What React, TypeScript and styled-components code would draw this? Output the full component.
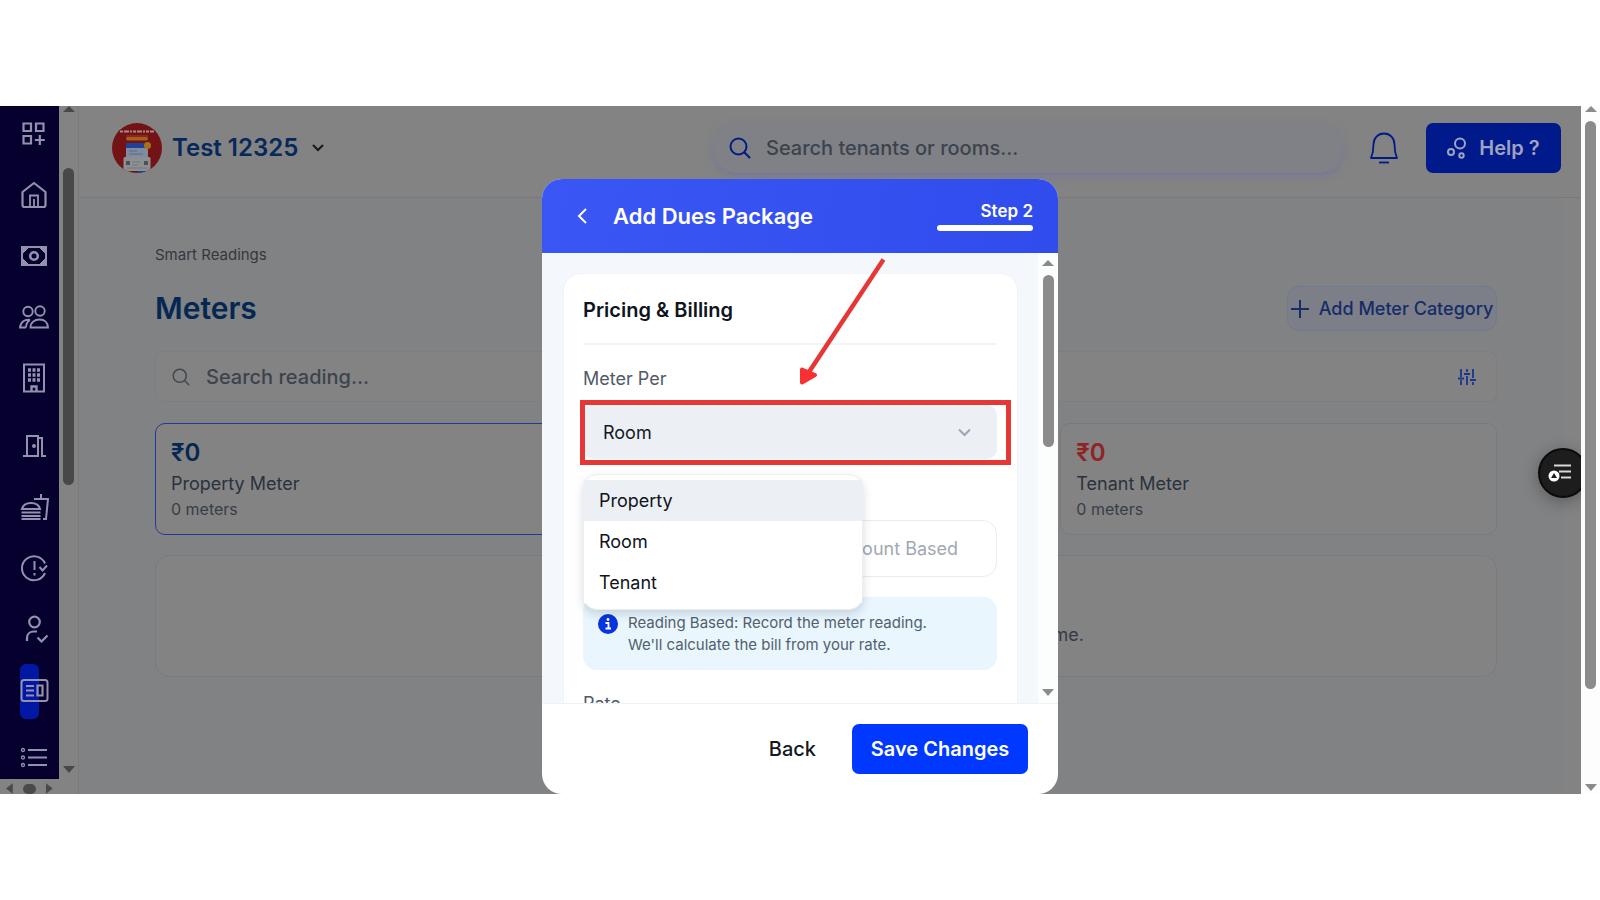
import React from "react";
import styled, { createGlobalStyle } from "styled-components";

const GlobalStyle = createGlobalStyle`
  *, *::before, *::after { box-sizing: border-box; }
  body { margin: 0; background: #fff; font-family: Inter, "Liberation Sans", sans-serif; }
  button, input, select { font-family: inherit; margin: 0; }
  h1, h2, h3, p { margin: 0; }
`;

const Page = styled.div`
  display: flex;
  height: 100vh;
  min-height: 700px;
  padding: 106px 0;
`;

const Frame = styled.div`
  position: relative;
  display: flex;
  flex: 1;
  min-width: 0;
`;

const Shell = styled.div`
  position: relative;
  display: flex;
  flex: 1;
  min-width: 0;
  overflow: hidden;
  background: #818284;
`;

/* ---------- scroll bars ---------- */

const Bar = styled.div<{ $width: number; $bg: string; $pad: string }>`
  display: flex;
  flex-direction: column;
  align-items: center;
  flex: none;
  width: ${(p) => p.$width}px;
  padding: ${(p) => p.$pad};
  background: ${(p) => p.$bg};
`;

const Track = styled.div`
  display: flex;
  flex-direction: column;
  flex: 1;
  margin: 8px 0 6px;
`;

const Space = styled.div<{ $grow: number }>`
  flex: ${(p) => p.$grow} 0 0;
`;

const Thumb = styled.div<{ $grow: number; $color: string }>`
  flex: ${(p) => p.$grow} 0 0;
  width: 11px;
  border-radius: 6px;
  background: ${(p) => p.$color};
`;

function ScrollBar(props: {
  width: number;
  bg: string;
  color: string;
  pad: string;
  parts: [number, number, number];
}) {
  const { width, bg, color, pad, parts } = props;
  return (
    <Bar $width={width} $bg={bg} $pad={pad} aria-hidden="true">
      <svg width="12" height="6" viewBox="0 0 12 6"><path d="M0 6 6 0l6 6z" fill={color} /></svg>
      <Track>
        <Space $grow={parts[0]} />
        <Thumb $grow={parts[1]} $color={color} />
        <Space $grow={parts[2]} />
      </Track>
      <svg width="12" height="7" viewBox="0 0 12 7"><path d="M0 0h12L6 7z" fill={color} /></svg>
    </Bar>
  );
}

/* ---------- side bar ---------- */

const Side = styled.div`
  display: flex;
  flex-direction: column;
  flex: none;
  width: 59px;
`;

const Nav = styled.nav`
  display: flex;
  flex-direction: column;
  flex: 1;
  gap: 7px;
  min-height: 0;
  overflow: hidden;
  padding: 0 0 0 9px;
  background: #06002f;
`;

const NavGroup = styled.div`
  display: flex;
  flex-direction: column;
  flex: none;
  &:first-child { margin-top: -3px; }
`;

const NavLink = styled.a<{ $active?: boolean }>`
  position: relative;
  display: flex;
  align-items: center;
  justify-content: center;
  height: 61px;
  color: #9491ad;
  &::before {
    content: "";
    display: ${(p) => (p.$active ? "block" : "none")};
    position: absolute;
    top: 5px;
    left: 11px;
    width: 19px;
    height: 55px;
    border-radius: 6px;
    background: #0018a4;
  }
  svg { position: relative; }
`;

const BottomBar = styled.div`
  display: flex;
  flex: none;
  align-items: flex-end;
  gap: 10px;
  height: 15px;
  padding: 0 6px;
  background: #838383;
`;

const Pill = styled.div`
  width: 14px;
  height: 10px;
  border-radius: 5px;
  background: #4a4a4a;
`;

const icons: Record<string, React.ReactNode> = {
  Dashboard: (
    <g strokeWidth="2.2">
      <path d="M4.500 4.500h7.500v7.500H4.500zM17 4.500h7.500v7.500H17zM4.500 17h7.500v7.500H4.500zM20.800 16v10M15.800 21h10" />
    </g>
  ),
  Home: (
    <g strokeWidth="2.2">
      <path d="M3.500 12 15 3l11.500 9v13a2 2 0 0 1-2 2h-19a2 2 0 0 1-2-2z" strokeLinejoin="round" />
      <path d="M11 27V15.500h8V27M15 27v-8" strokeWidth="1.800" />
    </g>
  ),
  Payments: (
    <g strokeWidth="2">
      <path d="M3 6h24v18H3z" />
      <path d="M3 6h7l-6 6zM27 6h-7l6 6zM3 24h7l-6-6zM27 24h-7l6-6z" fill="currentColor" strokeWidth="1" />
      <circle cx="15" cy="15" r="3.800" strokeWidth="2.600" />
    </g>
  ),
  Tenants: (
    <g strokeWidth="1.900">
      <circle cx="9" cy="9.500" r="4.700" />
      <circle cx="21" cy="9" r="4.700" />
      <path d="M11.500 25.500c0-5 4-8 9-8s8.500 3 8.500 8zM11 18c-5-1-9.500 2-10 7.500h6M11 18c-3 2-4 4-4 7.500" />
    </g>
  ),
  Property: (
    <g strokeWidth="2">
      <path d="M5 1.500h20v27H5z" />
      <path d="M9 7h3M13.500 7h3M18 7h3M9 12h3M13.500 12h3M18 12h3M9 17h3M13.500 17h3M18 17h3" strokeWidth="3.400" />
      <path d="M12.500 28v-4.500h5V28" strokeWidth="2.400" />
    </g>
  ),
  Rooms: (
    <g strokeWidth="2">
      <path d="M4 25h15V5H8v20M19 7h4v18h4M8 5v20" />
      <circle cx="15" cy="15" r="1" />
    </g>
  ),
  Food: (
    <g strokeWidth="2">
      <path d="M3 17c1-4 5-6 9-6s8 2 9 6zM2.500 20.500h19M2.500 24h19M2.500 27h19" />
      <path d="M15 7h14l-2 20h-3M22 7V2" />
    </g>
  ),
  Complaints: (
    <g strokeWidth="2">
      <path d="M26 10.500A12 12 0 1 0 26 20" />
      <path d="M15.500 8v9M15.500 20v2.500M20.500 14l3 3.500 4.500-5" />
    </g>
  ),
  Attendance: (
    <g strokeWidth="2.200">
      <circle cx="15.500" cy="8" r="5.300" />
      <path d="M8 27v-3c0-4 3-6.500 7-6.500h3M18.500 23.500l4 4 6-6" />
    </g>
  ),
  Meters: (
    <g strokeWidth="2">
      <rect x="2.500" y="5" width="26" height="21" rx="2.500" />
      <path d="M7 11h8M7 15.500h8M7 20.500h8M18.500 10.500h5v10h-5z" strokeWidth="2.200" />
    </g>
  ),
  List: (
    <g strokeWidth="1.800">
      <path d="M9 7h19M9 14.500h19M9 22h19" />
      <circle cx="4" cy="7" r="1.500" strokeWidth="1.300" />
      <circle cx="4" cy="14.500" r="1.500" strokeWidth="1.300" />
      <circle cx="4" cy="22" r="1.500" strokeWidth="1.300" />
    </g>
  ),
};

const navGroups = [
  ["Dashboard", "Home", "Payments", "Tenants", "Property"],
  ["Rooms", "Food", "Complaints", "Attendance", "Meters"],
  ["List"],
];

/* ---------- main area ---------- */

const Main = styled.div`
  display: flex;
  flex-direction: column;
  flex: 1;
  min-width: 0;
  border-left: 1px solid #797a7c;
`;

const Header = styled.header`
  display: flex;
  flex: none;
  align-items: center;
  height: 92px;
  padding: 0 20px 8px 33px;
  background: #838383;
  border-bottom: 1px solid #78797b;
`;

const Account = styled.button`
  display: flex;
  align-items: center;
  gap: 10px;
  padding: 0;
  border: 0;
  background: none;
  color: #05295a;
  font-size: 24px;
  font-weight: 600;
  white-space: nowrap;
  svg:last-child { margin-left: 4px; }
`;

const SearchPill = styled.label`
  display: flex;
  align-items: center;
  gap: 15px;
  width: 630px;
  height: 50px;
  margin-left: auto;
  padding: 0 16px;
  border-radius: 25px;
  background: #7f8186;
  box-shadow: 0 3px 8px #747996;
`;

const TextInput = styled.input`
  flex: 1;
  min-width: 0;
  padding: 0;
  border: 0;
  outline: 0;
  background: none;
  font-size: 20px;
  font-weight: 500;
  color: #3c434d;
  &::placeholder { color: #3c434d; opacity: 1; }
`;

const BellButton = styled.button`
  display: flex;
  margin: 0 27px 0 26px;
  padding: 0;
  border: 0;
  background: none;
`;

const HelpButton = styled.button`
  display: flex;
  align-items: center;
  justify-content: center;
  gap: 12px;
  width: 135px;
  height: 50px;
  padding: 0;
  border: 0;
  border-radius: 7px;
  background: #001a8c;
  color: #a0a3bf;
  font-size: 20px;
  font-weight: 600;
`;

const Body = styled.div`
  display: flex;
  flex: 1;
`;

const Gutter = styled.div`
  width: 18px;
  background: #838383;
`;

const Content = styled.main`
  display: flex;
  flex-direction: column;
  flex: 1;
  min-width: 0;
  padding: 46px 66px 0 76px;
`;

const Crumb = styled.p`
  font-size: 15px;
  line-height: 22px;
  color: #34383d;
`;

const TitleRow = styled.div`
  display: flex;
  align-items: center;
  justify-content: space-between;
  margin: 20px 0;
`;

const Title = styled.h1`
  font-size: 30px;
  line-height: 45px;
  font-weight: 600;
  color: #052853;
`;

const AddButton = styled.button`
  display: flex;
  align-items: center;
  justify-content: center;
  gap: 10px;
  width: 210px;
  height: 45px;
  padding: 0;
  border: 1px solid #707992;
  border-radius: 12px;
  background: #7c7f88;
  color: #152c68;
  font-size: 18px;
  font-weight: 500;
  white-space: nowrap;
`;

const ReadingSearch = styled.label`
  display: flex;
  align-items: center;
  gap: 16px;
  height: 51px;
  padding: 0 20px 0 16px;
  border: 1px solid #7c7e81;
  border-radius: 8px;
  background: #838383;
`;

const Cards = styled.div`
  display: grid;
  grid-template-columns: repeat(3, 1fr);
  gap: 16px;
  margin: 21px 0 20px;
`;

const MeterCard = styled.section<{ $active?: boolean; $column: number }>`
  grid-column: ${(p) => p.$column};
  display: flex;
  flex-direction: column;
  height: 112px;
  padding: 14px 15px;
  border: 1px solid ${(p) => (p.$active ? "#25399a" : "#777a7f")};
  border-radius: 10px;
  background: #838383;
`;

const Amount = styled.strong<{ $color: string }>`
  font-size: 24px;
  line-height: 30px;
  font-weight: 600;
  color: ${(p) => p.$color};
`;

const CardName = styled.span`
  font-size: 18px;
  line-height: 32px;
  color: #2a323e;
`;

const CardCount = styled.span`
  font-size: 16px;
  line-height: 18px;
  color: #373e49;
`;

const EmptyPanel = styled.section`
  display: flex;
  justify-content: center;
  height: 122px;
  padding-top: 67px;
  border: 1px solid #797b7e;
  border-radius: 14px;
  background: #838383;
`;

const EmptyText = styled.p`
  width: 516px;
  text-align: right;
  font-size: 18px;
  line-height: 24px;
  color: #343a44;
`;

const Assist = styled.button`
  position: absolute;
  z-index: 2;
  top: 342px;
  right: -7px;
  display: flex;
  align-items: center;
  justify-content: center;
  width: 50px;
  height: 50px;
  padding: 0 6px 0 0;
  border: 2px solid #0b0b0b;
  border-radius: 50%;
  background: #1d1d1d;
  box-shadow: 0 4px 16px rgba(0, 0, 0, 0.3);
`;

/* ---------- dialog ---------- */

const Overlay = styled.div`
  position: absolute;
  inset: 0;
  display: flex;
  justify-content: center;
  padding-top: 73px;
  pointer-events: none;
`;

const Dialog = styled.section`
  position: relative;
  display: flex;
  flex-direction: column;
  width: 516px;
  border-radius: 20px;
  overflow: hidden;
  background: #fff;
  pointer-events: auto;
`;

const DialogHead = styled.header`
  display: flex;
  flex: none;
  align-items: center;
  height: 74px;
  padding: 0 25px 0 34px;
  background: linear-gradient(100deg, #3a57f6, #304cec);
  color: #fff;
`;

const BackIcon = styled.button`
  display: flex;
  padding: 0;
  margin-right: 24px;
  border: 0;
  background: none;
`;

const DialogTitle = styled.h2`
  flex: 1;
  font-size: 22px;
  line-height: 28px;
  font-weight: 600;
`;

const Step = styled.div`
  display: flex;
  flex-direction: column;
  align-items: flex-end;
  gap: 3px;
  padding-bottom: 2px;
  font-size: 17px;
  line-height: 22px;
  font-weight: 600;
`;

const StepBar = styled.div`
  width: 96px;
  height: 6px;
  border-radius: 3px;
  background: #fff;
`;

const Scroller = styled.div`
  display: flex;
  flex: 1 1 0;
  min-height: 0;
  overflow: hidden;
  background: #f4f8fc;
`;

const Form = styled.form`
  flex: 1;
  align-self: flex-start;
  margin: 20px 20px 0 21px;
  padding: 20px 20px 20px 19px;
  border: 1px solid #f0f4f8;
  border-radius: 18px;
  background: #fff;
`;

const FormTitle = styled.h3`
  padding-bottom: 17px;
  border-bottom: 2px solid #f2f4f6;
  font-size: 20px;
  line-height: 32px;
  font-weight: 600;
  color: #10141c;
`;

const Label = styled.label`
  display: block;
  margin-top: 20px;
  font-size: 18px;
  line-height: 28px;
  color: #515a66;
`;

const SelectWrap = styled.div`
  position: relative;
  display: flex;
  margin-top: 12px;
`;

const Select = styled.select`
  flex: 1;
  height: 54px;
  padding: 0 20px;
  border: 0;
  border-radius: 10px;
  appearance: none;
  background: #ecf0f5;
  font-size: 18px;
  color: #14181f;
`;

const SelectChevron = styled.svg`
  position: absolute;
  top: 23px;
  right: 26px;
`;

const Highlight = styled.div`
  position: absolute;
  top: -5px;
  left: -3px;
  right: -14px;
  height: 65px;
  border: 5px solid #e53836;
  pointer-events: none;
`;

const Menu = styled.div`
  position: absolute;
  z-index: 1;
  top: 69px;
  left: 0;
  width: 280px;
  padding: 5px 0 6px;
  border: 1px solid #eceef1;
  border-radius: 14px;
  background: #fff;
  box-shadow: 0 4px 10px rgba(30, 50, 70, 0.18);
`;

const MenuItem = styled.button<{ $active?: boolean }>`
  display: block;
  width: 100%;
  height: 41px;
  padding: 0 15px;
  border: 0;
  background: ${(p) => (p.$active ? "#ecf0f5" : "#fff")};
  text-align: left;
  font-size: 18px;
  color: #10141c;
`;

const Segments = styled.div`
  display: grid;
  grid-template-columns: 1fr 1fr;
  gap: 10px;
  margin-top: 61px;
`;

const Segment = styled.button`
  grid-column: 2;
  height: 57px;
  padding: 0;
  border: 1px solid #e9ecef;
  border-radius: 14px;
  background: #fff;
  font-size: 18px;
  color: #a0a8b3;
`;

const Info = styled.div`
  display: flex;
  gap: 10px;
  height: 73px;
  margin-top: 20px;
  padding: 15px;
  border-radius: 14px;
  background: #e9f6fe;
  font-size: 15px;
  line-height: 22px;
  color: #52606c;
  white-space: nowrap;
  svg { margin-top: 2px; }
`;

const DialogFoot = styled.footer`
  display: flex;
  flex: none;
  align-items: center;
  justify-content: flex-end;
  gap: 16px;
  height: 91px;
  padding: 0 30px;
  border-top: 1px solid #eef2f5;
`;

const GhostButton = styled.button`
  height: 50px;
  padding: 0 20px;
  border: 0;
  background: none;
  font-size: 20px;
  font-weight: 500;
  color: #14181f;
`;

const SaveButton = styled.button`
  width: 176px;
  height: 50px;
  padding: 0;
  border: 0;
  border-radius: 7px;
  background: #0038ff;
  color: #fff;
  font-size: 20px;
  font-weight: 600;
`;

const Arrow = styled.svg`
  position: absolute;
  z-index: 2;
  top: 78px;
  left: 257px;
  pointer-events: none;
`;

const Search = ({ size, color, weight }: { size: number; color: string; weight: number }) => (
  <svg width={size} height={size} viewBox="0 0 22 22" fill="none" stroke={color} strokeWidth={weight} strokeLinecap="round">
    <circle cx="9.500" cy="9.500" r="8" />
    <path d="m15.500 15.500 5 5" />
  </svg>
);

const Avatar = () => (
  <svg width="50" height="50" viewBox="0 0 50 50">
    <defs><clipPath id="face"><circle cx="25" cy="25" r="25" /></clipPath></defs>
    <g clipPath="url(#face)">
      <path d="M0 0h50v50H0z" fill="#741315" />
      <path d="M8 8.500h34" stroke="#a58c8c" strokeWidth="2" strokeDasharray="3 1 5 1 2 1" />
      <path d="M14 13h22" stroke="#9b3a2c" strokeWidth="1" />
      <rect x="14" y="14" width="22" height="3.500" rx="1.700" fill="#a5601a" />
      <rect x="14" y="20" width="22" height="16" rx="2" fill="#7f8ba0" />
      <path d="M14 20h22v5H14z" fill="#22409a" />
      <circle cx="35.500" cy="22.500" r="3.500" fill="#a5741a" />
      <path d="M17 28h8M17 31h14" stroke="#5c6b90" />
      <rect x="11.500" y="34" width="27" height="14" rx="1.500" fill="#8d8f91" />
      <path d="M14 38h4v4h-4zM32 38h4v4h-4z" fill="#4d4f5d" />
      <path d="M20 39h8M20 42h6M15 45h20" stroke="#73777e" />
      <path d="M25 49h9" stroke="#22409a" strokeWidth="2" />
    </g>
  </svg>
);

export default function App() {
  return (
    <>
      <GlobalStyle />
      <Page>
        <Frame>
          <Shell>
            <Side>
              <Nav aria-label="Main">
                {navGroups.map((group) => (
                  <NavGroup key={group[0]}>
                    {group.map((name) => (
                      <NavLink key={name} href="#" aria-label={name} $active={name === "Meters"}>
                        <svg width="30" height="30" viewBox="0 0 30 30" fill="none" stroke="currentColor">
                          {icons[name]}
                        </svg>
                      </NavLink>
                    ))}
                  </NavGroup>
                ))}
              </Nav>
              <BottomBar aria-hidden="true">
                <svg width="7" height="11" viewBox="0 0 7 11"><path d="M7 0v11L0 5.500z" fill="#4a4a4a" /></svg>
                <Pill />
                <svg width="7" height="11" viewBox="0 0 7 11"><path d="M0 0v11l7-5.500z" fill="#4a4a4a" /></svg>
              </BottomBar>
            </Side>
            <ScrollBar width={19} bg="#838383" color="#484848" pad="0 0 21px" parts={[48, 320, 278]} />
            <Main>
              <Header>
                <Account>
                  <Avatar />
                  Test 12325
                  <svg width="12" height="8" viewBox="0 0 12 8" fill="none" stroke="#16191d" strokeWidth="2"><path d="m1 1 5 5 5-5" /></svg>
                </Account>
                <SearchPill>
                  <Search size={22} color="#001b85" weight={2} />
                  <TextInput aria-label="Search tenants or rooms" placeholder="Search tenants or rooms..." />
                </SearchPill>
                <BellButton aria-label="Notifications">
                  <svg width="30" height="32" viewBox="0 0 30 32" fill="none" stroke="#001b85" strokeWidth="1.800" strokeLinejoin="round">
                    <path d="M4.500 12.500C4.500 6 9 1.500 15 1.500S25.500 6 25.500 12.500c0 7 1 10 2.500 13.500H2c1.500-3.500 2.500-6.500 2.500-13.500z" />
                    <path d="M10 30.500h10" />
                  </svg>
                </BellButton>
                <HelpButton>
                  <svg width="20" height="22" viewBox="0 0 20 22" fill="none" stroke="currentColor" strokeWidth="2">
                    <circle cx="13" cy="6.500" r="5" />
                    <circle cx="4" cy="15" r="3" />
                    <circle cx="14.500" cy="18.500" r="2.200" />
                  </svg>
                  Help ?
                </HelpButton>
              </Header>
              <Body>
                <Content>
                  <Crumb>Smart Readings</Crumb>
                  <TitleRow>
                    <Title>Meters</Title>
                    <AddButton>
                      <svg width="18" height="18" viewBox="0 0 18 18" stroke="currentColor" strokeWidth="2"><path d="M9 0v18M0 9h18" /></svg>
                      Add Meter Category
                    </AddButton>
                  </TitleRow>
                  <ReadingSearch>
                    <Search size={18} color="#414850" weight={1.8} />
                    <TextInput aria-label="Search reading" placeholder="Search reading..." />
                    <svg width="18" height="16" viewBox="0 0 18 16" fill="none" stroke="#1b338e" strokeWidth="1.800">
                      <path d="M3 0v8M3 11v5M0 9.500h6M9 0v3M9 7v9M6 5h6M15 0v9M15 13v3M12 11h6" />
                    </svg>
                  </ReadingSearch>
                  <Cards>
                    <MeterCard $column={1} $active>
                      <Amount $color="#052853">₹0</Amount>
                      <CardName>Property Meter</CardName>
                      <CardCount>0 meters</CardCount>
                    </MeterCard>
                    <MeterCard $column={3}>
                      <Amount $color="#8f2325">₹0</Amount>
                      <CardName>Tenant Meter</CardName>
                      <CardCount>0 meters</CardCount>
                    </MeterCard>
                  </Cards>
                  <EmptyPanel>
                    <EmptyText>me.</EmptyText>
                  </EmptyPanel>
                </Content>
                <Gutter />
              </Body>
            </Main>
            <Assist aria-label="Assistant">
              <svg width="24" height="20" viewBox="0 0 24 20" stroke="#d8d8d8" strokeWidth="2">
                <path d="M6 2.500h17M11 8.500h12M13 14.500h10" />
                <circle cx="6" cy="13" r="5.500" fill="#fff" stroke="none" />
                <path d="m6 10 3 5H3z" fill="#1d1d1d" stroke="none" />
              </svg>
            </Assist>
          </Shell>
          <ScrollBar width={19} bg="#fdfdfd" color="#8b8b8b" pad="0 0 3px" parts={[1, 573, 90]} />
          <Overlay>
            <Dialog role="dialog" aria-label="Add Dues Package">
              <DialogHead>
                <BackIcon aria-label="Previous step">
                  <svg width="13" height="16" viewBox="0 0 13 16" fill="none" stroke="#fff" strokeWidth="2"><path d="m10 1-7 7 7 7" /></svg>
                </BackIcon>
                <DialogTitle>Add Dues Package</DialogTitle>
                <Step>
                  Step 2
                  <StepBar />
                </Step>
              </DialogHead>
              <Scroller>
                <Form>
                  <FormTitle>Pricing &amp; Billing</FormTitle>
                  <Label htmlFor="meter-per">Meter Per</Label>
                  <SelectWrap>
                    <Select id="meter-per" defaultValue="Room">
                      <option>Room</option>
                    </Select>
                    <SelectChevron width="13" height="9" viewBox="0 0 13 9" fill="none" stroke="#9ba5b5" strokeWidth="2">
                      <path d="m1 1.500 5.500 5.500L12 1.500" />
                    </SelectChevron>
                    <Highlight />
                    <Menu>
                      <MenuItem type="button" $active>Property</MenuItem>
                      <MenuItem type="button">Room</MenuItem>
                      <MenuItem type="button">Tenant</MenuItem>
                    </Menu>
                  </SelectWrap>
                  <Segments>
                    <Segment type="button">Amount Based</Segment>
                  </Segments>
                  <Info>
                    <svg width="20" height="20" viewBox="0 0 20 20">
                      <circle cx="10" cy="10" r="10" fill="#0634e0" />
                      <path d="M7.500 9h3v5M7.500 14.500h5.500" fill="none" stroke="#fff" strokeWidth="1.800" />
                      <circle cx="10" cy="5.500" r="1.400" fill="#fff" />
                    </svg>
                    <p>Reading Based: Record the meter reading.<br />We'll calculate the bill from your rate.</p>
                  </Info>
                  <Label as="div">Rate</Label>
                </Form>
                <ScrollBar width={20} bg="#fcfdfd" color="#8b8b8b" pad="7px 0" parts={[1, 174, 238]} />
              </Scroller>
              <DialogFoot>
                <GhostButton>Back</GhostButton>
                <SaveButton>Save Changes</SaveButton>
              </DialogFoot>
              <Arrow width="90" height="130" viewBox="0 0 90 130" aria-hidden="true">
                <path d="M84.500 2.500 10 115" stroke="#e53836" strokeWidth="4.500" fill="none" />
                <path d="M3 112.500v13l13-7.500z" fill="#f93030" stroke="#f93030" strokeWidth="4" strokeLinejoin="round" />
              </Arrow>
            </Dialog>
          </Overlay>
        </Frame>
      </Page>
    </>
  );
}
